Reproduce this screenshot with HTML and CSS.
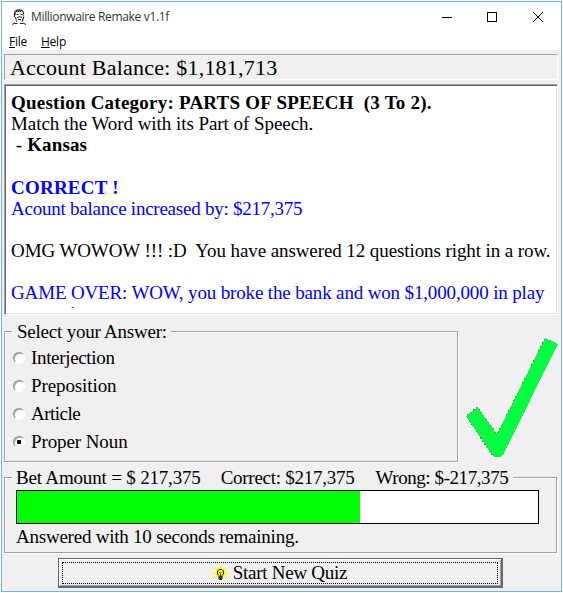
FILE: index.html
```html
<!DOCTYPE html>
<html lang="en">
<head>
<meta charset="utf-8">
<title>Millionwaire Remake v1.1f</title>
<link rel="stylesheet" href="styles.css">
</head>
<body>
<div class="window">
  <header class="titlebar">
    <svg class="app-icon" width="16" height="16" viewBox="0 0 16 16">
      <path d="M4 3Q5 .5 9 .8Q12.500 1 13 4L12.500 9L10 12.500L6 11L4.500 7Z" fill="#fff"/>
      <path d="M3.500 8V4Q4 1 8 .8Q12 1 12.500 4V9L11 12.500" fill="none" stroke="#222" stroke-width="1.200"/>
      <path d="M5 2.500h4M5.500 5.500h2M9.500 5.500h2M6 8.500q3-1.500 5 0M7 10.500h3M4.500 8l1 4M1 15.500l3-1.500M12 14l3 1.500M3.500 14.500h3M9 14.500h3" fill="none" stroke="#222"/>
      <path d="M4.500 2v4M5.500 10v3M8 2.500h2" stroke="#b040c0"/>
      <path d="M6.500 1.500v2M12.500 5v3" stroke="#58a070"/>
    </svg>
    <span class="title">Millionwaire Remake v1.1f</span>
    <svg class="controls" width="102" height="12" viewBox="0 0 102 12" shape-rendering="crispEdges">
      <path d="M0 6.500h10" stroke="#000"/>
      <rect x="45.500" y="1.500" width="9" height="9" fill="none" stroke="#000"/>
      <path d="M91 1l10 10M101 1L91 11" stroke="#000" shape-rendering="auto"/>
    </svg>
  </header>
  <nav class="menubar"><span><u>F</u>ile</span><span><u>H</u>elp</span></nav>
  <main class="content">
    <div class="balance"><span>Account Balance: $1,181,713</span></div>
    <div class="log">
      <p class="bold l1">Question Category: PARTS OF SPEECH&nbsp; (3 To 2).</p>
      <p class="l2">Match the Word with its Part of Speech.</p>
      <p class="l3">&nbsp;- <b>Kansas</b></p>
      <p class="gap">&nbsp;</p>
      <p class="bold blue l4">CORRECT !</p>
      <p class="blue l5">Acount balance increased by: $217,375</p>
      <p>&nbsp;</p>
      <p class="l6">OMG WOWOW !!! :D&nbsp; You have answered 12 questions right in a row.</p>
      <p>&nbsp;</p>
      <p class="blue l7">GAME OVER: WOW, you broke the bank and won $1,000,000 in play</p>
      <p class="blue last">money, in</p>
    </div>
    <div class="answer-row">
      <section class="group answers">
        <h2 class="legend"><span>Select your Answer:</span></h2>
        <label><i class="radio"></i><span class="a1">Interjection</span></label>
        <label><i class="radio"></i><span class="a2">Preposition</span></label>
        <label><i class="radio"></i><span class="a3">Article</span></label>
        <label><i class="radio on"></i><span class="a4">Proper Noun</span></label>
      </section>
      <svg class="check" width="93" height="121" viewBox="0 0 93 121" shape-rendering="crispEdges">
        <path d="M0 79L11.500 70L31 97L79 1L92 7L37 118L34 120H29L26 118Z" fill="#00ff40"/>
        <path d="M26 118L0 79L11.500 70L31 97L79 1L92 7" fill="none" stroke="#f020a0" stroke-dasharray="1 3"/>
      </svg>
    </div>
    <section class="group bet">
      <h2 class="legend"><span class="b1">Bet Amount = $ 217,375</span><span class="b2">Correct: $217,375</span><span class="b3">Wrong: $-217,375</span></h2>
      <div class="progress"><div class="fill"></div></div>
      <p class="status"><span>Answered with 10 seconds remaining.</span></p>
    </section>
    <button class="start"><span class="focus">
      <svg class="bulb" width="15" height="15" viewBox="0 0 15 15">
        <path d="M7.500 0v3M2 2l3 3M13 2l-3 3M0 7h3M12 7h3M2 12l3-3M13 12l-3-3" stroke="#ff0" stroke-width="1.500"/>
        <circle cx="7.500" cy="6.500" r="5" fill="#ff0"/>
        <path d="M6 9.500L4.500 8V5L6 3.500H9L10.500 5V8L9 9.500V13H6Z" fill="#ff0" stroke="#111"/>
        <path d="M6.500 6l1 1.500L8.500 6M7.500 7v3" fill="none" stroke="#333" stroke-width=".8"/>
        <path d="M6 11h3M6 13h3" stroke="#111" stroke-width="1.500"/>
      </svg>
      <span class="caption">Start New Quiz</span>
    </span></button>
  </main>
</div>
</body>
</html>
```

FILE: styles.css
```css
* { box-sizing: border-box; }
body { margin: 0; background: #fff; font-family: "Liberation Serif", serif; font-size: 19px; color: #000; }
p, h2 { margin: 0; font-size: inherit; font-weight: normal; }
.window { width: 561px; height: 591px; margin: 1px; border: 1px solid #70b7df; background: #f0f0f0; }
.titlebar { height: 29px; background: #fff; display: flex; align-items: center; padding: 0 17px 0 9px; }
.app-icon { display: block; }
.title { font: 12px/16px "Open Sans", sans-serif; letter-spacing: -.33px; margin-left: 4px; color: #333; white-space: nowrap; }
.controls { margin-left: auto; }
.menubar { height: 19px; background: #fff; display: flex; gap: 14px; padding-left: 7px; font: 12px/21px "Open Sans", sans-serif; letter-spacing: -.25px; }
.content { padding: 4px 3px 0 2px; }
.balance { height: 26px; border: 1px solid; border-color: #a0a0a0 #fff #fff #a0a0a0; padding-left: 5px; font-size: 22px; line-height: 26px; letter-spacing: .22px; white-space: nowrap; }
.log { height: 231px; margin-top: 4px; background: #fff; border: 1px solid; border-color: #a0a0a0 #fff #fff #a0a0a0; box-shadow: inset 1px 1px #696969, inset -1px -1px #e3e3e3; padding: 7px 0 0 6px; overflow: hidden; }
.log p { height: 21px; line-height: 21px; white-space: nowrap; }
.log p.gap { height: 22px; }
.log p.last { height: 5px; overflow: hidden; letter-spacing: -.15px; }
.l1 { letter-spacing: .23px; }
.l2 { letter-spacing: -.05px; }
.l3 { letter-spacing: .12px; }
.l4 { letter-spacing: .22px; }
.l5 { letter-spacing: -.24px; }
.l6 { letter-spacing: -.09px; }
.l7 { letter-spacing: -.15px; }
.bold { font-weight: bold; }
.blue { color: #00f; }
.answer-row { display: flex; margin-top: 16px; height: 131px; }
.group { position: relative; border: 1px solid #a0a0a0; box-shadow: 1px 1px #fff, inset 1px 1px #fff; }
.legend { position: absolute; left: 7px; top: -11px; height: 22px; line-height: 22px; padding: 0 5px; background: #f0f0f0; white-space: nowrap; display: flex; }
.answers { flex: none; width: 454px; padding-top: 12px; }
.answers .legend { width: 159px; letter-spacing: -.22px; }
.answers label { display: flex; align-items: center; height: 28px; padding-left: 8px; }
.answers label span { margin-left: 6px; }
.a1 { letter-spacing: -.33px; }
.a2 { letter-spacing: -.1px; }
.a3 { letter-spacing: -.5px; }
.a4 { letter-spacing: -.1px; }
.radio { width: 12px; height: 12px; border-radius: 50%; border: 1px solid; border-color: #8c8c8c #fff #fff #8c8c8c; background: #fff; box-shadow: inset 1px 1px #b0b0b0; display: grid; place-items: center; }
.radio.on::after { content: ""; width: 4px; height: 4px; border-radius: 1px; background: #000; }
.check { flex: none; margin: 6px 0 0 8px; }
.bet { height: 76px; width: 553px; margin-top: 15px; padding: 12px 0 0 11px; }
.bet .legend { width: 501px; padding-left: 4px; }
.b1 { letter-spacing: -.18px; }
.b2 { letter-spacing: -.26px; margin-left: 20px; }
.b3 { letter-spacing: -.42px; margin-left: 21px; }
.progress { width: 523px; height: 34px; border: 1px solid #000; background: #fff; }
.fill { width: 343px; height: 32px; background: #0f0; }
.status { line-height: 26px; height: 26px; letter-spacing: -.23px; white-space: nowrap; }
.start { display: block; width: 445px; height: 30px; margin: 5px 0 0 54px; padding: 3px; border: 1px solid #696969; border-width: 1px 2px 2px 1px; box-shadow: inset 1px 1px #fff, inset -1px -1px #a0a0a0; background: #f0f0f0; font: inherit; color: #000; }
.focus { display: flex; height: 22px; border: 1px dotted #000; align-items: center; justify-content: center; }
.bulb { margin-right: 5px; }
.caption { letter-spacing: -.27px; }
```
